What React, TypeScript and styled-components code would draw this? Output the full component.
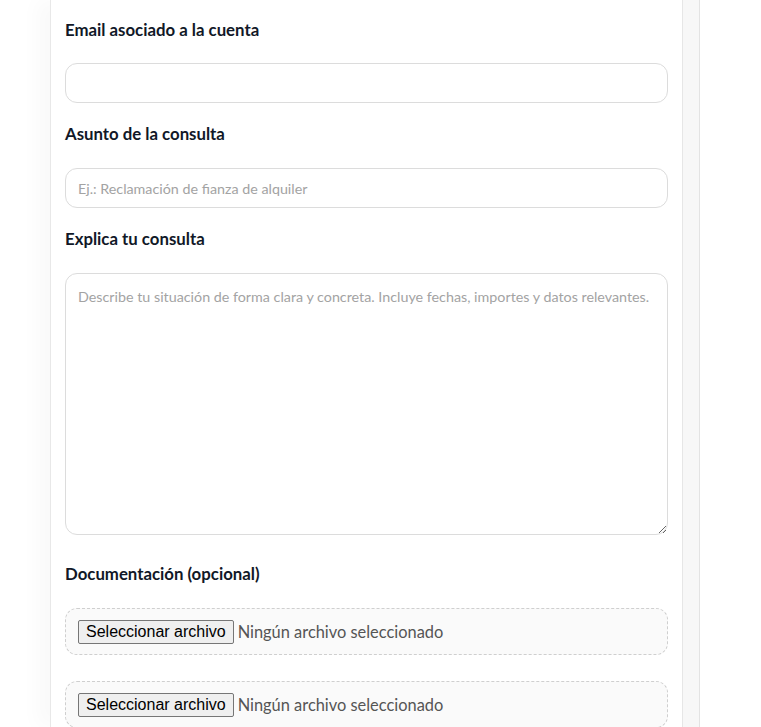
import React from 'react';
import styled, { createGlobalStyle } from 'styled-components';

const GlobalStyle = createGlobalStyle`
  html, body {
    margin: 0;
    padding: 0;
    background: #ffffff;
  }
  body {
    font-family: Lato, "Noto Sans", sans-serif;
    color: #111827;
  }
`;

const Page = styled.div`
  display: flex;
  padding-left: 50px;
  height: 727px;
  overflow: hidden;
`;

const Shell = styled.div`
  display: flex;
  background: #f7f7f7;
  border-left: 1px solid #e8e8e8;
  border-right: 1px solid #e3e3e3;
  padding-right: 16px;
  box-shadow: -14px 0 18px rgba(0, 0, 0, 0.025);
`;

const Card = styled.form`
  box-sizing: border-box;
  width: 632px;
  background: #ffffff;
  border-right: 1px solid #e6e6e6;
  padding: 18px 14px 0 14px;
  display: flex;
  flex-direction: column;
`;

const Field = styled.div<{ $gap?: number }>`
  display: flex;
  flex-direction: column;
  margin-bottom: ${(p) => p.$gap ?? 19}px;
`;

const Label = styled.label<{ $space?: number }>`
  font-size: 16.8px;
  font-weight: 700;
  line-height: 24px;
  margin-bottom: ${(p) => p.$space ?? 22}px;
  color: #111827;
`;

const TextInput = styled.input`
  box-sizing: border-box;
  height: 40px;
  width: 100%;
  border: 1px solid #dcdcdc;
  border-radius: 12px;
  padding: 0 12px;
  font-family: inherit;
  font-size: 14.3px;
  outline: none;
  &::placeholder {
    color: #a3a3a3;
  }
`;

const TextArea = styled.textarea`
  box-sizing: border-box;
  height: 262px;
  width: 100%;
  border: 1px solid #dcdcdc;
  border-radius: 12px;
  padding: 13px 12px;
  font-family: inherit;
  font-size: 14.3px;
  line-height: 20px;
  resize: vertical;
  outline: none;
  &::placeholder {
    color: #a3a3a3;
  }
`;

const FileBox = styled.label`
  box-sizing: border-box;
  height: 47px;
  display: flex;
  align-items: center;
  gap: 4px;
  padding: 0 12px;
  border: 1px dashed #cfcfcf;
  border-radius: 12px;
  background: #fafafa;
  margin-bottom: 26px;
  cursor: pointer;

  input {
    display: none;
  }
`;

const PickButton = styled.span`
  font-family: "Liberation Sans", Arial, sans-serif;
  font-size: 16px;
  line-height: 20px;
  color: #000000;
  background: #efefef;
  border: 1px solid #767676;
  border-radius: 2px;
  padding: 1px 7px;
`;

const FileName = styled.span`
  font-size: 16.4px;
  color: #555555;
`;

const FilePicker: React.FC = () => (
  <FileBox>
    <input type="file" />
    <PickButton>Seleccionar archivo</PickButton>
    <FileName>Ningún archivo seleccionado</FileName>
  </FileBox>
);

export default function App() {
  return (
    <>
      <GlobalStyle />
      <Page>
        <Shell>
          <Card>
            <Field>
              <Label $space={21}>Email asociado a la cuenta</Label>
              <TextInput type="email" />
            </Field>
            <Field>
              <Label>Asunto de la consulta</Label>
              <TextInput placeholder="Ej.: Reclamación de fianza de alquiler" />
            </Field>
            <Field $gap={27}>
              <Label>Explica tu consulta</Label>
              <TextArea placeholder="Describe tu situación de forma clara y concreta. Incluye fechas, importes y datos relevantes." />
            </Field>
            <Field $gap={0}>
              <Label>Documentación (opcional)</Label>
              <FilePicker />
              <FilePicker />
            </Field>
          </Card>
        </Shell>
      </Page>
    </>
  );
}
